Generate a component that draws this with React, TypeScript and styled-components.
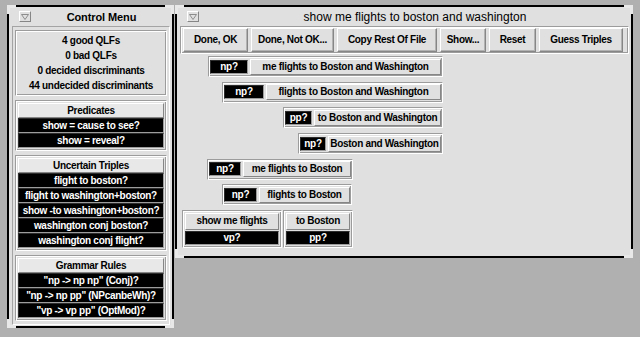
import styled, { createGlobalStyle, css } from "styled-components"

const GlobalStyle = createGlobalStyle`
  html, body {
    margin: 0;
    padding: 0;
    background: #b0b0b0;
  }
  body {
    font-family: "Liberation Sans", Arial, sans-serif;
  }
`

const FACE = "#e0e0e0"
const LIGHT = "#ffffff"
const SHADE = "#868686"

const raised = css`
  border: 1px solid;
  border-color: ${LIGHT} ${SHADE} ${SHADE} ${LIGHT};
`

const etched = css`
  border: 1px solid;
  border-color: #9c9c9c ${LIGHT} ${LIGHT} #9c9c9c;
  box-shadow: inset 1px 1px 0 ${LIGHT}, inset -1px -1px 0 #9c9c9c;
`

const label = css`
  font-size: 10px;
  font-weight: 700;
  letter-spacing: -0.3px;
  white-space: nowrap;
  overflow: hidden;
  text-align: center;
`

const stats = ["4 good QLFs", "0 bad QLFs", "0 decided discriminants", "44 undecided discriminants"]

const groups = [
  { title: "Predicates", items: ["show = cause to see?", "show = reveal?"] },
  {
    title: "Uncertain Triples",
    items: [
      "flight to boston?",
      "flight to washington+boston?",
      "show -to washington+boston?",
      "washington conj boston?",
      "washington conj flight?",
    ],
  },
  {
    title: "Grammar Rules",
    items: ['"np -> np np" (Conj)?', '"np -> np pp" (NPcanbeWh)?', '"vp -> vp pp" (OptMod)?'],
  },
]

const actions = [
  { text: "Done, OK", w: 65 },
  { text: "Done, Not OK...", w: 83 },
  { text: "Copy Rest Of File", w: 100 },
  { text: "Show...", w: 46 },
  { text: "Reset", w: 47 },
  { text: "Guess Triples", w: 84 },
]

// x is the page position of the box's left edge, canvas starts at 180
const CANVAS_X = 180
const spans = [
  { x: 208, w: 235, tagW: 38, tag: "np?", text: "me flights to Boston and Washington" },
  { x: 222, w: 221, tagW: 40, tag: "np?", text: "flights to Boston and Washington" },
  { x: 283, w: 160, tagW: 27, tag: "pp?", text: "to Boston and Washington" },
  { x: 298, w: 145, tagW: 26, tag: "np?", text: "Boston and Washington" },
  { x: 207, w: 146, tagW: 32, tag: "np?", text: "me flights to Boston" },
  { x: 222, w: 130, tagW: 33, tag: "np?", text: "flights to Boston" },
]

const stacks = [
  { w: 100, tag: "vp?", text: "show me flights" },
  { w: 70, tag: "pp?", text: "to Boston" },
]

export default function App() {
  return (
    <>
      <GlobalStyle />
      <Desktop>
        <Window $w={167} $h={323}>
          <Corners />
          <TitleBar>
            <MenuMark />
            <Title $bold>Control Menu</Title>
          </TitleBar>
          <MenuBody>
            <Panel>
              {stats.map(s => (
                <StatLine key={s}>{s}</StatLine>
              ))}
            </Panel>
            {groups.map(g => (
              <Panel key={g.title}>
                <PanelHeader>{g.title}</PanelHeader>
                {g.items.map(i => (
                  <DarkItem key={i}>{i}</DarkItem>
                ))}
              </Panel>
            ))}
          </MenuBody>
        </Window>

        <Window $w={458} $h={253}>
          <Corners />
          <TitleBar>
            <MenuMark />
            <Title>show me flights to boston and washington</Title>
          </TitleBar>
          <ParseBody>
            <ButtonBar>
              {actions.map(a => (
                <BarButton key={a.text} $w={a.w}>
                  {a.text}
                </BarButton>
              ))}
            </ButtonBar>
            <Canvas>
              {spans.map(s => (
                <SpanBox key={s.text} $x={s.x - CANVAS_X} $w={s.w}>
                  <Tag $w={s.tagW}>{s.tag}</Tag>
                  <Phrase>{s.text}</Phrase>
                </SpanBox>
              ))}
              <StackRow>
                {stacks.map(s => (
                  <StackBox key={s.text} $w={s.w}>
                    <Phrase $h={15}>{s.text}</Phrase>
                    <Tag>{s.tag}</Tag>
                  </StackBox>
                ))}
              </StackRow>
            </Canvas>
          </ParseBody>
        </Window>
      </Desktop>
    </>
  )
}

const Corners = () => (
  <>
    <Corner $at="tl" />
    <Corner $at="tr" />
    <Corner $at="bl" />
    <Corner $at="br" />
  </>
)

const MenuMark = () => (
  <MarkBox>
    <svg width="8" height="6" viewBox="0 0 8 6">
      <polygon points="0.5,0.5 7.5,0.5 4,5.5" fill="none" stroke="#8c8c8c" strokeWidth="1" />
    </svg>
  </MarkBox>
)

const Desktop = styled.div`
  display: flex;
  align-items: flex-start;
  gap: 1px;
  height: 337px;
  box-sizing: border-box;
  padding: 5px 0 0 7px;
  background: #b0b0b0;
`

const Window = styled.div<{ $w: number; $h: number }>`
  position: relative;
  box-sizing: border-box;
  width: ${p => p.$w}px;
  height: ${p => p.$h}px;
  border: 2px solid #000;
  background: ${FACE};
  display: flex;
  flex-direction: column;
`

const Corner = styled.span<{ $at: "tl" | "tr" | "bl" | "br" }>`
  position: absolute;
  width: 9px;
  height: 9px;
  box-sizing: border-box;
  border: 0 solid #e8e8e8;
  ${p => (p.$at[0] === "t" ? "top: -2px; border-top-width: 3px;" : "bottom: -2px; border-bottom-width: 3px;")}
  ${p => (p.$at[1] === "l" ? "left: -2px; border-left-width: 3px;" : "right: -2px; border-right-width: 3px;")}
`

const TitleBar = styled.div`
  display: flex;
  align-items: center;
  height: 19px;
  flex-shrink: 0;
  padding-left: 10px;
`

const MarkBox = styled.div`
  width: 12px;
  height: 11px;
  box-sizing: border-box;
  ${raised};
  display: flex;
  align-items: center;
  justify-content: center;
`

const Title = styled.div<{ $bold?: boolean }>`
  flex: 1;
  text-align: center;
  color: #000;
  white-space: nowrap;
  font-size: ${p => (p.$bold ? 11 : 12)}px;
  font-weight: ${p => (p.$bold ? 700 : 400)};
  letter-spacing: ${p => (p.$bold ? "-0.1px" : "0")};
`

const MenuBody = styled.div`
  flex: 1;
  display: flex;
  flex-direction: column;
  gap: 4px;
  margin: 0 2px 2px 3px;
  padding: 3px 2px;
  border: 1px solid;
  border-color: #a4a4a4 ${LIGHT} ${LIGHT} #a4a4a4;
`

const Panel = styled.div`
  ${etched};
  padding: 2px;
  display: flex;
  flex-direction: column;
`

const StatLine = styled.div`
  ${label};
  height: 15px;
  line-height: 15px;
  color: #000;
`

const PanelHeader = styled.div`
  ${label};
  ${raised};
  height: 15px;
  box-sizing: border-box;
  line-height: 13px;
  background: #e8e8e8;
  color: #000;
`

const DarkItem = styled.div`
  ${label};
  height: 15px;
  box-sizing: border-box;
  line-height: 13px;
  background: #000;
  color: #fff;
  border: 1px solid;
  border-color: #2c2c2c #9c9c9c #9c9c9c #2c2c2c;
`

const ParseBody = styled.div`
  flex: 1;
  display: flex;
  flex-direction: column;
  padding: 0 2px 2px 3px;
`

const ButtonBar = styled.div`
  ${etched};
  display: flex;
  gap: 3px;
  padding: 1px 2px;
`

const BarButton = styled.div<{ $w: number }>`
  ${label};
  ${raised};
  width: ${p => p.$w}px;
  height: 24px;
  box-sizing: border-box;
  line-height: 21px;
  box-shadow: inset -1px -1px 0 #b2b2b2;
  color: #000;
`

const Canvas = styled.div`
  flex: 1;
  display: flex;
  flex-direction: column;
  align-items: flex-start;
  gap: 4.7px;
  padding-top: 2px;
`

const SpanBox = styled.div<{ $x: number; $w: number }>`
  ${etched};
  margin-left: ${p => p.$x}px;
  width: ${p => p.$w}px;
  height: 21px;
  box-sizing: border-box;
  padding: 0 1px;
  display: flex;
  align-items: center;
  gap: 2px;
`

const Tag = styled.div<{ $w?: number }>`
  ${label};
  width: ${p => (p.$w ? `${p.$w}px` : "auto")};
  flex-shrink: 0;
  height: 14px;
  box-sizing: border-box;
  line-height: 12px;
  background: #000;
  color: #fff;
  border: 1px solid;
  border-color: #2c2c2c #9c9c9c #9c9c9c #2c2c2c;
`

const Phrase = styled.div<{ $h?: number }>`
  ${label};
  ${raised};
  flex: 1;
  height: ${p => p.$h ?? 16}px;
  flex-shrink: 0;
  box-sizing: border-box;
  line-height: ${p => (p.$h ?? 16) - 2}px;
  color: #000;
`

const StackRow = styled.div`
  display: flex;
  gap: 1px;
  margin-left: 2px;
`

const StackBox = styled.div<{ $w: number }>`
  ${etched};
  width: ${p => p.$w}px;
  height: 38px;
  box-sizing: border-box;
  padding: 2px;
  display: flex;
  flex-direction: column;
  gap: 1px;
`
